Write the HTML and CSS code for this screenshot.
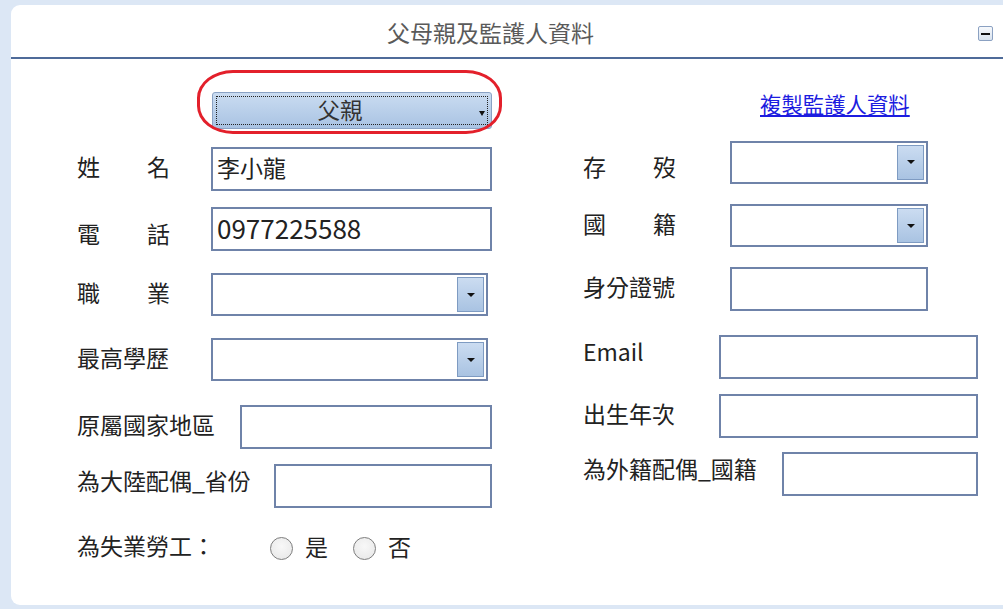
FILE: index.html
```html
<!DOCTYPE html>
<html lang="zh-Hant">
<head>
<meta charset="utf-8">
<title>父母親及監護人資料</title>
<link rel="stylesheet" href="styles.css">
</head>
<body>
<div class="panel">
  <div class="panel-header">
    <div class="panel-title">父母親及監護人資料</div>
    <div class="collapse-btn"><span class="minus"></span></div>
  </div>
  <div class="panel-body">
    <div class="col col-left">
      <div class="top-row">
        <div class="who-select">
          <span class="who-text">父親</span>
          <span class="who-arrow"></span>
          <span class="focus-ring"></span>
          <span class="annotation"></span>
        </div>
      </div>
      <div class="row mt18">
        <div class="lbl spread"><span>姓</span><span>名</span></div>
        <input class="txt w281" type="text" value="李小龍">
      </div>
      <div class="row mt16">
        <div class="lbl spread lbl-low"><span>電</span><span>話</span></div>
        <input class="txt w281 digits" type="text" value="0977225588">
      </div>
      <div class="row mt22">
        <div class="lbl spread"><span>職</span><span>業</span></div>
        <div class="sel w277"><span class="sel-btn"></span></div>
      </div>
      <div class="row mt22">
        <div class="lbl">最高學歷</div>
        <div class="sel w277"><span class="sel-btn"></span></div>
      </div>
      <div class="row mt24">
        <div class="lbl">原屬國家地區</div>
        <input class="txt w252" type="text" value="">
      </div>
      <div class="row mt15">
        <div class="lbl lbl-high">為大陸配偶_省份</div>
        <input class="txt w218" type="text" value="">
      </div>
      <div class="radio-row">
        <div class="lbl radio-lbl">為失業勞工：</div>
        <input class="radio" type="radio" name="unemp">
        <span class="opt">是</span>
        <input class="radio radio-second" type="radio" name="unemp">
        <span class="opt">否</span>
      </div>
    </div>

    <div class="col col-right">
      <div class="top-row">
        <a class="copy-link" href="#">複製監護人資料</a>
      </div>
      <div class="row mt11">
        <div class="lbl spread lbl-low"><span>存</span><span>歿</span></div>
        <div class="sel w198"><span class="sel-btn"></span></div>
      </div>
      <div class="row mt20">
        <div class="lbl spread"><span>國</span><span>籍</span></div>
        <div class="sel w198"><span class="sel-btn"></span></div>
      </div>
      <div class="row mt20">
        <div class="lbl">身分證號</div>
        <input class="txt w198" type="text" value="">
      </div>
      <div class="row mt24">
        <div class="lbl lbl-high">Email</div>
        <input class="txt w259" type="text" value="">
      </div>
      <div class="row mt15">
        <div class="lbl">出生年次</div>
        <input class="txt w259" type="text" value="">
      </div>
      <div class="row mt14">
        <div class="lbl lbl-high">為外籍配偶_國籍</div>
        <input class="txt w196" type="text" value="">
      </div>
    </div>
  </div>
</div>
</body>
</html>
```

FILE: styles.css
```css
* { box-sizing: border-box; }

html, body {
  margin: 0;
  height: 100%;
}

body {
  background: #dce7f5;
  font-family: "Noto Sans CJK TC", "Noto Sans", sans-serif;
  color: #222;
  overflow: hidden;
}

.panel {
  margin: 5px 0 0 11px;
  width: 1000px;
  height: 600px;
  background: #fff;
  border-radius: 9px;
}

.panel-header {
  display: flex;
  align-items: center;
  height: 54px;
  border-bottom: 2px solid #4f6b99;
}

.panel-title {
  flex: 1;
  text-align: center;
  font-size: 23px;
  line-height: 30px;
  color: #5a5a5a;
  padding-top: 2px;
}

.collapse-btn {
  width: 15px;
  height: 15px;
  margin: 5px 18px 0 8px;
  border: 1px solid #8ba1c2;
  border-radius: 2px;
  background: linear-gradient(#f7f9fc, #d9e3ef);
  display: flex;
  align-items: center;
  justify-content: center;
}

.minus {
  width: 9px;
  height: 2px;
  background: #111;
}

.panel-body {
  display: flex;
}

.col {
  display: flex;
  flex-direction: column;
  padding-top: 33px;
}

.col-left {
  margin-left: 66px;
  width: 415px;
}

.col-right {
  margin-left: 91px;
  width: 395px;
}

.top-row {
  display: flex;
  align-items: flex-start;
  height: 37px;
}

.who-select {
  position: relative;
  margin-left: 135px;
  width: 280px;
  height: 37px;
  border: 1px solid #8aa2c4;
  border-radius: 3px;
  background: linear-gradient(#cadcf1, #a9c3e3);
  display: flex;
  align-items: center;
}

.who-text {
  flex: 1;
  text-align: center;
  padding-right: 12px;
  padding-bottom: 4px;
  font-size: 22.5px;
  line-height: 30px;
  color: #333;
}

.who-arrow {
  margin-right: 6px;
  margin-top: 6px;
  width: 0;
  height: 0;
  border-left: 3px solid transparent;
  border-right: 3px solid transparent;
  border-top: 5px solid #111;
}

.focus-ring {
  position: absolute;
  left: 3px;
  right: 3px;
  top: 3px;
  bottom: 3px;
  border: 1px dotted #222;
  pointer-events: none;
}

.annotation {
  position: absolute;
  left: -16px;
  top: -23px;
  width: 305px;
  height: 64px;
  border: 3px solid #e3202b;
  border-radius: 36px / 28px;
  pointer-events: none;
}

.copy-link {
  margin-left: 177px;
  margin-top: -2px;
  font-size: 21.4px;
  line-height: 28px;
  color: #1c1ce0;
  text-decoration: underline;
}

.row {
  display: flex;
  align-items: center;
  justify-content: space-between;
}

.mt11 { margin-top: 11px; }
.mt14 { margin-top: 14px; }
.mt15 { margin-top: 15px; }
.mt16 { margin-top: 16px; }
.mt18 { margin-top: 18px; }
.mt20 { margin-top: 20px; }
.mt22 { margin-top: 22px; }
.mt24 { margin-top: 24px; }

.lbl {
  flex: none;
  font-size: 23px;
  line-height: 24px;
  color: #222;
  white-space: nowrap;
  padding-bottom: 6px;
}

.spread {
  width: 93px;
  display: flex;
  justify-content: space-between;
}

.lbl-low { padding-top: 14px; padding-bottom: 6px; }
.lbl-high { padding-bottom: 12px; }

.txt {
  height: 44px;
  border: 2px solid #6f83a9;
  padding: 0 4px 4px;
  font-family: inherit;
  font-size: 23px;
  color: #222;
  background: #fff;
  outline: none;
}

.digits { font-size: 26px; }

.sel {
  height: 43px;
  border: 2px solid #6f83a9;
  padding: 2px;
  display: flex;
  justify-content: flex-end;
  background: #fff;
}

.sel-btn {
  width: 27px;
  height: 100%;
  border: 1px solid #7e9bc2;
  background: linear-gradient(#cbdcf1, #a9c3e2);
  display: flex;
  align-items: center;
  justify-content: center;
}

.sel-btn::after {
  content: "";
  width: 0;
  height: 0;
  border-left: 4px solid transparent;
  border-right: 4px solid transparent;
  border-top: 4px solid #111;
}

.w281 { width: 281px; }
.w277 { width: 277px; margin-right: 4px; }
.w252 { width: 252px; }
.w218 { width: 218px; }
.w198 { width: 198px; margin-right: 50px; }
.w259 { width: 259px; }
.w196 { width: 196px; }

.radio-row {
  display: flex;
  align-items: center;
  height: 30px;
  margin-top: 25px;
}

.radio-lbl {
  width: 193px;
}

.radio {
  appearance: none;
  -webkit-appearance: none;
  margin: 0;
  width: 23px;
  height: 23px;
  border: 1.5px solid #7d7d7d;
  border-radius: 50%;
  background: radial-gradient(circle at 50% 40%, #f8f8f8, #e6e6e6);
}

.radio-second { margin-left: 25px; }

.opt {
  margin-left: 12px;
  padding-bottom: 4px;
  font-size: 23px;
  line-height: 24px;
  color: #222;
}
```
